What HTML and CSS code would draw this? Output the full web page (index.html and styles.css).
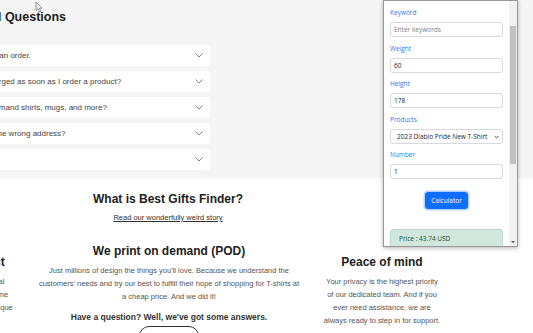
FILE: index.html
```html
<!DOCTYPE html>
<html lang="en">
<head>
    <meta charset="UTF-8">
    <meta name="viewport" content="width=device-width, initial-scale=1.0">
    <title>Best Gifts Finder</title>
    <link rel="stylesheet" href="styles.css">
</head>
<body>
    <section class="faq">
        <div class="wrap">
            <h2>Frequently Asked Questions</h2>
            <div class="faq-list">
                <div class="faq-item">
                    <span>How do I cancel or modify an order.</span>
                    <svg viewBox="0 0 8 5"><path d="M0.5 0.5 L4 4 L7.5 0.5"/></svg>
                </div>
                <div class="faq-item">
                    <span>Will my credit card get charged as soon as I order a product?</span>
                    <svg viewBox="0 0 8 5"><path d="M0.5 0.5 L4 4 L7.5 0.5"/></svg>
                </div>
                <div class="faq-item">
                    <span>Do you provide print on demand shirts, mugs, and more?</span>
                    <svg viewBox="0 0 8 5"><path d="M0.5 0.5 L4 4 L7.5 0.5"/></svg>
                </div>
                <div class="faq-item">
                    <span>What happens if I ship to the wrong address?</span>
                    <svg viewBox="0 0 8 5"><path d="M0.5 0.5 L4 4 L7.5 0.5"/></svg>
                </div>
                <div class="faq-item">
                    <span>How long is shipping?</span>
                    <svg viewBox="0 0 8 5"><path d="M0.5 0.5 L4 4 L7.5 0.5"/></svg>
                </div>
            </div>
        </div>
    </section>

    <section class="about">
        <div class="wrap">
            <h2 class="about-title">What is Best Gifts Finder?</h2>
            <p class="story"><a href="#">Read our wonderfully weird story</a></p>

            <div class="features">
                <div class="feature">
                    <h3>Premium product</h3>
                    <p>Every single design is original<br>and printed with care every time<br>to make every single gift so unique<br>for you.</p>
                </div>
                <div class="feature main">
                    <h3>We print on demand (POD)</h3>
                    <p>Just millions of design the things you'll love. Because we understand the customers' needs and try our best to fulfill their hope of shopping for T-shirts at a cheap price. And we did it!</p>
                    <p class="ask">Have a question? Well, we've got some answers.</p>
                    <a class="btn-outline" href="#">View FAQ</a>
                </div>
                <div class="feature side">
                    <h3>Peace of mind</h3>
                    <p>Your privacy is the highest priority of our dedicated team. And if you ever need assistance, we are always ready to step in for support.</p>
                </div>
            </div>
        </div>
    </section>

    <div class="popup">
        <div class="popup-body">
            <div class="field">
                <label>Keyword</label>
                <input type="text" placeholder="Enter keywords">
            </div>
            <div class="field">
                <label>Weight</label>
                <input type="text" value="60">
            </div>
            <div class="field">
                <label>Height</label>
                <input type="text" value="178">
            </div>
            <div class="field">
                <label>Products</label>
                <div class="select-box">
                    <select>
                        <option>2023 Diablo Pride New T-Shirt</option>
                    </select>
                    <svg viewBox="0 0 6 4"><path d="M0.8 0.8 L3 3 L5.2 0.8"/></svg>
                </div>
            </div>
            <div class="field">
                <label>Number</label>
                <input type="text" value="1">
            </div>
            <div class="actions">
                <button>Calculator</button>
            </div>
            <div class="price">Price : 43.74 USD</div>
        </div>
        <div class="scrollbar">
            <div class="thumb"></div>
            <div class="arrow"></div>
        </div>
    </div>

    <svg class="cursor" viewBox="0 0 8 12"><path d="M1 1 L1 9.5 L3 7.6 L4.6 11 L5.8 10.4 L4.3 7.2 L7 7.2 Z"/></svg>
</body>
</html>
```

FILE: styles.css
```css
body {
    margin: 0;
    font-family: "Liberation Sans", Arial, sans-serif;
    background-color: #fff;
    color: #333;
    overflow: hidden;
}
.wrap {
    width: 546px;
    margin-left: -105px;
}

/* faq */
.faq {
    background-color: #f5f5f5;
    padding: 9px 0 8px;
}
.faq h2 {
    margin: 0 0 20px 2px;
    font-size: 12.5px;
    line-height: 16px;
    color: #222;
}
.faq-list {
    width: 315px;
    display: flex;
    flex-direction: column;
    gap: 5px;
}
.faq-item {
    background: #fff;
    border-radius: 3px;
    display: flex;
    justify-content: space-between;
    align-items: center;
    padding: 5px 7px 5px 10px;
    font-size: 8px;
    line-height: 11px;
    color: #444;
    white-space: nowrap;
}
.faq-item svg {
    width: 8px;
    height: 5px;
    fill: none;
    stroke: #888;
    stroke-width: 1;
}

/* about */
.about {
    padding-top: 14px;
    text-align: center;
}
.about-title {
    margin: 0;
    font-size: 12px;
    line-height: 14px;
    color: #222;
}
.story {
    margin: 7px 0 0;
    font-size: 7.5px;
    line-height: 10px;
}
.story a {
    color: #333;
}
.features {
    display: flex;
    gap: 22px;
    align-items: flex-start;
    margin-top: 21px;
}
.feature {
    width: 120px;
    flex-shrink: 0;
    padding-top: 11px;
}
.feature.main {
    width: 264px;
    padding-top: 0;
}
.feature.side {
    width: 118px;
}
.feature h3 {
    margin: 0;
    font-size: 12px;
    line-height: 14px;
    color: #222;
    white-space: nowrap;
}
.feature p {
    margin: 6px 0 0;
    font-size: 7.5px;
    line-height: 13px;
    color: #555;
    white-space: nowrap;
}
.feature.main p,
.feature.side p {
    white-space: normal;
}
.feature .ask {
    margin-top: 8px;
    font-size: 8.5px;
    line-height: 12px;
    font-weight: bold;
    color: #333;
}
.btn-outline {
    display: inline-block;
    margin-top: 3px;
    width: 58px;
    padding: 7px 0 4px;
    border: 1px solid #333;
    border-radius: 10px;
    font-size: 8px;
    line-height: 10px;
    color: #333;
    text-decoration: none;
}

/* calculator popup */
.popup {
    position: absolute;
    top: 0;
    left: 383px;
    width: 133px;
    height: 245px;
    border: 1px solid #999;
    box-shadow: 0 1px 4px rgba(0, 0, 0, 0.3);
    background: #fff;
    display: flex;
    overflow: hidden;
    font-family: "Open Sans", sans-serif;
}
.popup-body {
    flex: 1;
    padding: 7px 6px 0;
    overflow: hidden;
}
.field {
    margin-bottom: 6.5px;
}
.field label {
    display: block;
    font-size: 6.5px;
    line-height: 10px;
    color: #2b7bea;
    margin-bottom: 4px;
}
.field input,
.field select {
    display: block;
    width: 100%;
    box-sizing: border-box;
    height: 15px;
    margin: 0;
    padding: 0 3px;
    border: 1px solid #d6dadf;
    border-radius: 3px;
    background: #fff;
    font-family: inherit;
    font-size: 6.5px;
    color: #212529;
    outline: none;
}
.field input::placeholder {
    color: #7a8087;
}
.select-box {
    position: relative;
}
.field select {
    appearance: none;
    padding-left: 6px;
}
.select-box svg {
    position: absolute;
    right: 4px;
    top: 6px;
    width: 5px;
    height: 4px;
    fill: none;
    stroke: #343a40;
    stroke-width: 1.1;
}
.actions {
    text-align: center;
}
.actions button {
    height: 17px;
    padding: 0 5px;
    border: 1px solid #0d6efd;
    border-radius: 3px;
    background-color: #0d6efd;
    color: #fff;
    font-family: inherit;
    font-size: 6.5px;
    box-shadow: 0 0 0 1.5px rgba(13, 110, 253, 0.3);
}
.price {
    margin-top: 20px;
    height: 30px;
    padding: 4px 8px;
    background: #d1e7dd;
    border: 1px solid #badbcc;
    border-radius: 3px;
    font-size: 6.5px;
    line-height: 10px;
    color: #0f5132;
}
.scrollbar {
    width: 8px;
    background: #f1f1f1;
    display: flex;
    flex-direction: column;
    align-items: center;
}
.thumb {
    width: 6px;
    height: 138px;
    margin-top: 25px;
    background: #c1c1c1;
}
.arrow {
    margin-top: auto;
    margin-bottom: 3px;
    width: 0;
    height: 0;
    border-left: 2px solid transparent;
    border-right: 2px solid transparent;
    border-top: 2px solid #505050;
}

.cursor {
    position: absolute;
    left: 35px;
    top: 1px;
    width: 8px;
    height: 12px;
    fill: #fff;
    stroke: #777;
    stroke-width: 0.8;
    pointer-events: none;
}
```
